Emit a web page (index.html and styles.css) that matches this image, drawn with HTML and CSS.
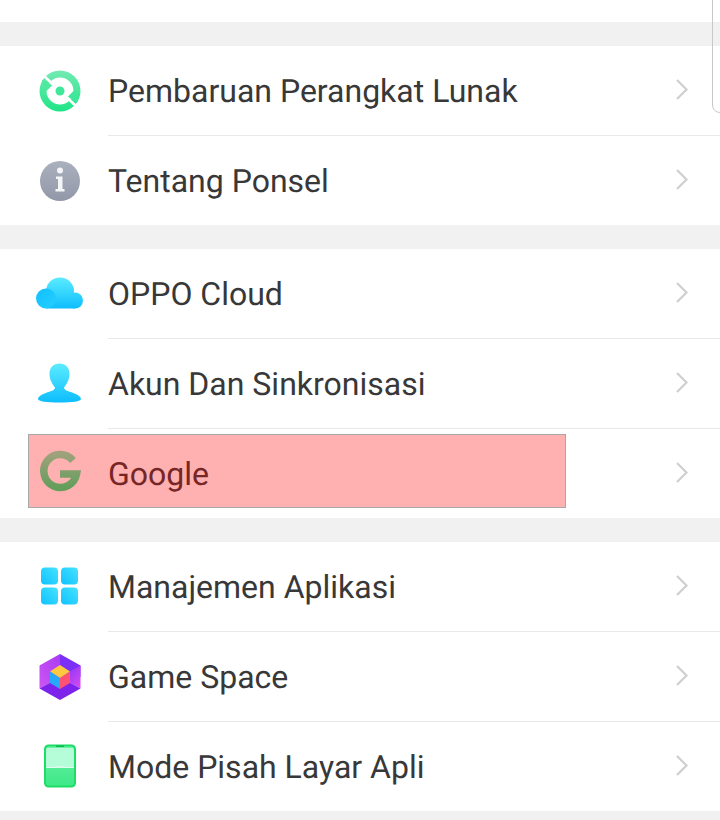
FILE: index.html
```html
<!DOCTYPE html>
<html lang="en">
<head>
  <meta charset="UTF-8" />
  <title>Pengaturan</title>
  <link rel="stylesheet" href="styles.css">
</head>
<body>

<svg class="defs" width="0" height="0">
  <defs>
    <linearGradient id="gradGreen" x1="0" y1="0" x2="0" y2="1">
      <stop offset="0" stop-color="#73eab3"/>
      <stop offset="1" stop-color="#1ee585"/>
    </linearGradient>
    <linearGradient id="gradGray" x1="0" y1="0" x2="0" y2="1">
      <stop offset="0" stop-color="#abb0be"/>
      <stop offset="1" stop-color="#9298a8"/>
    </linearGradient>
    <linearGradient id="gradBlue" x1="0" y1="0" x2="0" y2="1">
      <stop offset="0" stop-color="#5cecff"/>
      <stop offset="1" stop-color="#0dbdfd"/>
    </linearGradient>
    <linearGradient id="gradCloud" gradientUnits="userSpaceOnUse" x1="0" y1="7" x2="0" y2="39">
      <stop offset="0" stop-color="#5cecff"/>
      <stop offset="1" stop-color="#0dbdfd"/>
    </linearGradient>
    <linearGradient id="gradCloudLeft" x1="0" y1="0" x2="1" y2="1">
      <stop offset="0" stop-color="#10c0ff"/>
      <stop offset="1" stop-color="#26ceff"/>
    </linearGradient>
    <linearGradient id="gradGrid" x1="1" y1="0" x2="0" y2="1">
      <stop offset="0" stop-color="#45e2ff"/>
      <stop offset="1" stop-color="#10c2ff"/>
    </linearGradient>
    <linearGradient id="gradHexRight" x1="0" y1="0" x2="1" y2="1">
      <stop offset="0" stop-color="#7b2ff7"/>
      <stop offset="1" stop-color="#d94cf2"/>
    </linearGradient>
    <linearGradient id="gradHexLeft" x1="1" y1="0" x2="0" y2="1">
      <stop offset="0" stop-color="#a93cf0"/>
      <stop offset="1" stop-color="#cf55f5"/>
    </linearGradient>
    <linearGradient id="gradPhone" x1="0" y1="0" x2="0" y2="1">
      <stop offset="0" stop-color="#6df2a6"/>
      <stop offset="1" stop-color="#3de888"/>
    </linearGradient>
  </defs>
</svg>

<div class="top-space"></div>

<section class="group">
  <div class="row">
    <svg class="icon" viewBox="0 0 48 48">
      <circle cx="24" cy="24" r="20.500" fill="url(#gradGreen)"/>
      <circle cx="24" cy="24" r="13.500" fill="#fff"/>
      <path d="M6 13 L16.500 18 L9.500 25 Z" fill="#4ce9a0"/>
      <path d="M42 35 L31.500 30 L38.500 23 Z" fill="#3fe79a"/>
      <path d="M6 7 L17 17.500 M42 41 L31 30.500" stroke="#fff" stroke-width="2.600" fill="none"/>
      <circle cx="24" cy="24" r="4.500" fill="#3fe79a"/>
    </svg>
    <div class="row-body">
      <span class="label">Pembaruan Perangkat Lunak</span>
      <svg class="chevron" viewBox="0 0 14 21"><path d="M2 1 L11.500 10.500 L2 20"/></svg>
    </div>
  </div>
  <div class="row">
    <svg class="icon" viewBox="0 0 48 48">
      <circle cx="24" cy="24" r="20" fill="url(#gradGray)"/>
      <circle cx="24" cy="13.500" r="3" fill="#f4f5f7"/>
      <path d="M20 19.500 H26.500 V32 H28.500 V34.500 H19.500 V32 H22 V22 H20 Z" fill="#f4f5f7"/>
    </svg>
    <div class="row-body">
      <span class="label">Tentang Ponsel</span>
      <svg class="chevron" viewBox="0 0 14 21"><path d="M2 1 L11.500 10.500 L2 20"/></svg>
    </div>
  </div>
</section>

<section class="group">
  <div class="row">
    <svg class="icon" viewBox="0 0 48 48">
      <circle cx="24" cy="21.500" r="14" fill="url(#gradCloud)"/>
      <circle cx="39" cy="30.500" r="8" fill="url(#gradCloud)"/>
      <rect x="10" y="26" width="29" height="12.500" fill="url(#gradCloud)"/>
      <circle cx="10" cy="28.500" r="10" fill="url(#gradCloudLeft)"/>
    </svg>
    <div class="row-body">
      <span class="label">OPPO Cloud</span>
      <svg class="chevron" viewBox="0 0 14 21"><path d="M2 1 L11.500 10.500 L2 20"/></svg>
    </div>
  </div>
  <div class="row">
    <svg class="icon" viewBox="0 0 48 48">
      <path d="M23.500 3.500 C30 3.500 33.500 8 33.500 14 C33.500 20 30 25 28 27.500 C28 29.500 30 30.500 33 31.500 C40 33.500 45 36.500 45 39 C45 41.500 36 42.500 23.500 42.500 C11 42.500 2 41.500 2 39 C2 36.500 7 33.500 14 31.500 C17 30.500 19 29.500 19 27.500 C17 25 13.500 20 13.500 14 C13.500 8 17 3.500 23.500 3.500 Z" fill="url(#gradBlue)"/>
    </svg>
    <div class="row-body">
      <span class="label">Akun Dan Sinkronisasi</span>
      <svg class="chevron" viewBox="0 0 14 21"><path d="M2 1 L11.500 10.500 L2 20"/></svg>
    </div>
  </div>
  <div class="row">
    <svg class="icon" viewBox="0 0 48 48">
      <path d="M37 10.500 A16.500 16.500 0 1 0 40.500 24 H24" fill="none" stroke="url(#gradGreen)" stroke-width="7.500"/>
    </svg>
    <div class="row-body">
      <span class="label">Google</span>
      <svg class="chevron" viewBox="0 0 14 21"><path d="M2 1 L11.500 10.500 L2 20"/></svg>
    </div>
    <div class="highlight"></div>
  </div>
</section>

<section class="group">
  <div class="row">
    <svg class="icon" viewBox="0 0 48 48">
      <rect x="5" y="4.500" width="17" height="17" rx="4" fill="url(#gradGrid)"/>
      <rect x="25" y="4.500" width="17" height="17" rx="4" fill="url(#gradGrid)"/>
      <rect x="5" y="24.500" width="17" height="17" rx="4" fill="url(#gradGrid)"/>
      <rect x="25" y="24.500" width="17" height="17" rx="4" fill="url(#gradGrid)"/>
    </svg>
    <div class="row-body">
      <span class="label">Manajemen Aplikasi</span>
      <svg class="chevron" viewBox="0 0 14 21"><path d="M2 1 L11.500 10.500 L2 20"/></svg>
    </div>
  </div>
  <div class="row">
    <svg class="icon" viewBox="0 0 48 48">
      <path d="M24 1 L44.500 12.500 V24 L24 24 Z" fill="#7b2ff7"/>
      <path d="M44.500 12.500 V35.500 L24 24 Z" fill="url(#gradHexRight)"/>
      <path d="M24 1 L3.500 12.500 V35.500 L24 24 Z" fill="url(#gradHexLeft)"/>
      <path d="M3.500 35.500 L24 47 L44.500 35.500 L24 24 Z" fill="#7d22ea"/>
      <path d="M24 12 L34 18.500 L24 25 L14 18.500 Z" fill="#ffc93f"/>
      <path d="M14 18.500 L24 25 V36 L14 30 Z" fill="#27a8f8"/>
      <path d="M34 18.500 L24 25 V36 L34 30 Z" fill="#ff5273"/>
    </svg>
    <div class="row-body">
      <span class="label">Game Space</span>
      <svg class="chevron" viewBox="0 0 14 21"><path d="M2 1 L11.500 10.500 L2 20"/></svg>
    </div>
  </div>
  <div class="row">
    <svg class="icon" viewBox="0 0 48 48">
      <rect x="9" y="2.500" width="30" height="41" rx="3.500" fill="url(#gradPhone)" stroke="#1ddd68" stroke-width="2"/>
      <rect x="10" y="5" width="28" height="19.500" rx="2" fill="#b4fdd8"/>
      <rect x="10" y="24" width="28" height="1" fill="#e6fff2"/>
      <rect x="20" y="2.500" width="8" height="1.500" fill="#0fb84e"/>
      <rect x="20" y="23" width="8" height="2" fill="#d8fbe8"/>
    </svg>
    <div class="row-body">
      <span class="label">Mode Pisah Layar Apli</span>
      <svg class="chevron" viewBox="0 0 14 21"><path d="M2 1 L11.500 10.500 L2 20"/></svg>
    </div>
  </div>
</section>

<div class="scroll-edge"></div>

</body>
</html>
```

FILE: styles.css
```css
body {
  margin: 0;
  padding: 0;
  position: relative;
  height: 820px;
  overflow: hidden;
  background: #f1f1f1;
  font-family: Roboto, sans-serif;
  color: #383838;
  text-rendering: geometricPrecision;
}

.defs {
  position: absolute;
}

.top-space {
  height: 22px;
  background: white;
}

.group {
  margin-top: 24px;
  background: white;
}

.row {
  position: relative;
  display: flex;
  align-items: stretch;
}

.icon {
  flex: none;
  width: 48px;
  height: 48px;
  margin: auto 24px auto 36px;
}

.row-body {
  flex: 1;
  height: 89px;
  padding-right: 31px;
  display: flex;
  align-items: center;
  justify-content: space-between;
  border-bottom: 1px solid #e8e8e8;
}

.row:last-child .row-body {
  border-bottom: none;
}

.label {
  font-size: 32px;
}

.chevron {
  width: 14px;
  height: 21px;
  margin-bottom: 2px;
  fill: none;
  stroke: #cfcfcf;
  stroke-width: 2.2;
}

.highlight {
  position: absolute;
  left: 28px;
  top: 5px;
  width: 538px;
  height: 74px;
  box-sizing: border-box;
  background: rgba(255, 0, 0, 0.31);
  border: 1px solid #a8a8a8;
}

.scroll-edge {
  position: absolute;
  left: 712px;
  top: -20px;
  width: 20px;
  height: 133px;
  box-sizing: border-box;
  border: 1px solid #c8c8c8;
  border-radius: 8px;
}
```
